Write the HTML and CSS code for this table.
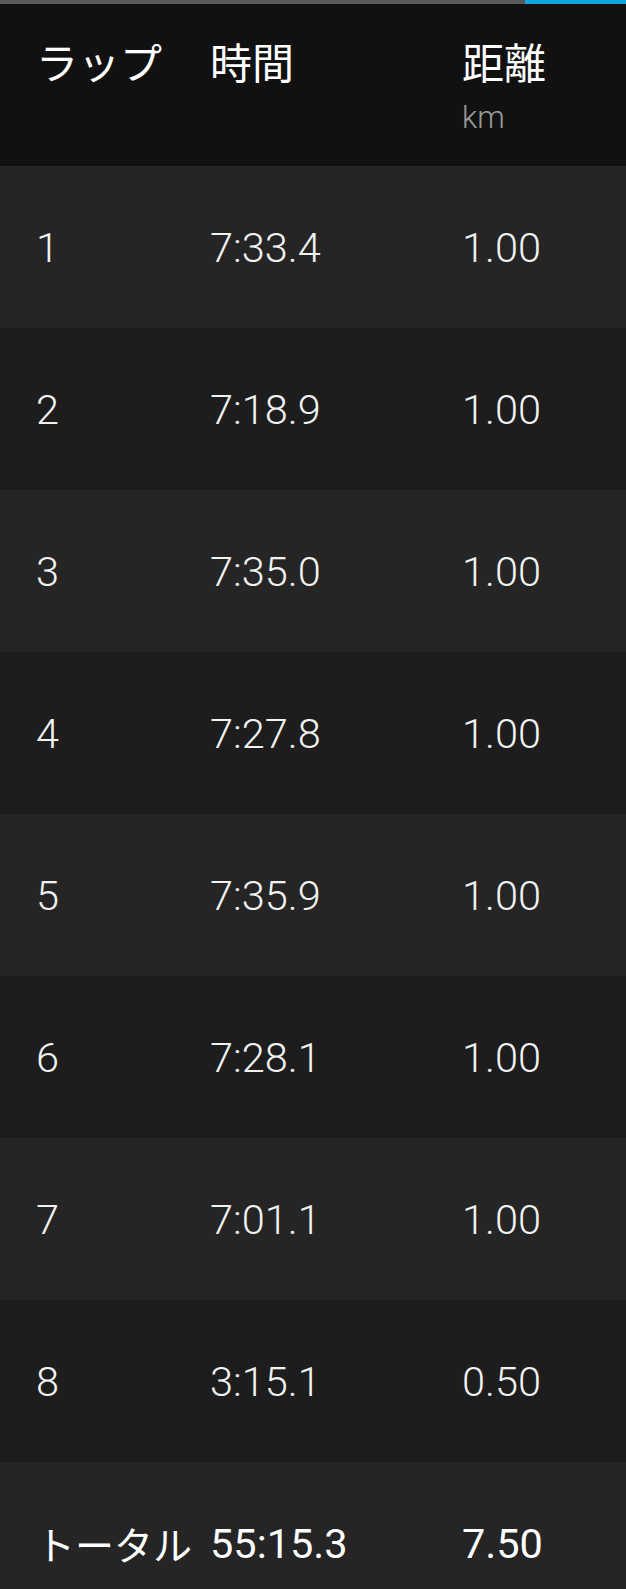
FILE: index.html
```html
<!DOCTYPE html>
<html lang="ja">
<head>
<meta charset="utf-8">
<link rel="stylesheet" href="styles.css">
</head>
<body>
<div class="progress"><div class="progress-fill"></div></div>
<div class="table">
  <div class="row head">
    <div class="cell">ラップ</div>
    <div class="cell">時間</div>
    <div class="cell">距離<div class="unit">km</div></div>
  </div>
  <div class="row odd"><div class="cell">1</div><div class="cell">7:33.4</div><div class="cell">1.00</div></div>
  <div class="row even"><div class="cell">2</div><div class="cell">7:18.9</div><div class="cell">1.00</div></div>
  <div class="row odd"><div class="cell">3</div><div class="cell">7:35.0</div><div class="cell">1.00</div></div>
  <div class="row even"><div class="cell">4</div><div class="cell">7:27.8</div><div class="cell">1.00</div></div>
  <div class="row odd"><div class="cell">5</div><div class="cell">7:35.9</div><div class="cell">1.00</div></div>
  <div class="row even"><div class="cell">6</div><div class="cell">7:28.1</div><div class="cell">1.00</div></div>
  <div class="row odd"><div class="cell">7</div><div class="cell">7:01.1</div><div class="cell">1.00</div></div>
  <div class="row even"><div class="cell">8</div><div class="cell">3:15.1</div><div class="cell">0.50</div></div>
  <div class="row odd total"><div class="cell jp">トータル</div><div class="cell">55:15.3</div><div class="cell">7.50</div></div>
</div>
</body>
</html>
```
FILE: styles.css
```css
html, body {
  margin: 0;
  padding: 0;
  background: #111111;
}
body {
  width: 626px;
  height: 1589px;
  overflow: hidden;
  font-family: Roboto, "Noto Sans CJK JP", sans-serif;
  color: #f2f2f2;
}
.progress {
  height: 4px;
  background: #5a5a5a;
  display: flex;
  justify-content: flex-end;
}
.progress-fill {
  width: 101px;
  background: #12a3e3;
}
.row {
  display: grid;
  grid-template-columns: 174px 252px 1fr;
  padding-left: 36px;
  height: 162px;
  align-items: center;
  font-size: 41.5px;
  font-weight: 300;
}
.odd { background: #252525; }
.even { background: #1d1d1d; }
.head {
  background: #111111;
  align-items: start;
  padding-top: 36px;
  box-sizing: border-box;
  font-family: "Noto Sans CJK JP", sans-serif;
  font-weight: 400;
  font-size: 42px;
  line-height: 1;
  color: #ffffff;
}
.unit {
  font-family: Roboto, sans-serif;
  font-weight: 300;
  font-size: 31px;
  color: #9a9a9a;
  margin-top: 20px;
}
.total {
  font-weight: 400;
  color: #ffffff;
}
.jp {
  font-family: "Noto Sans CJK JP", sans-serif;
  font-size: 39px;
}
```
